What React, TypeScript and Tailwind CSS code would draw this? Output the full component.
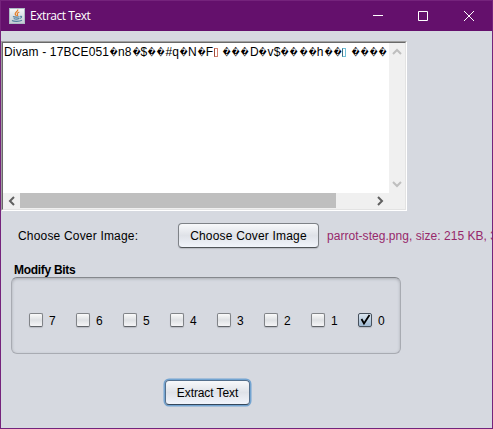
import React from "react";

type Run = [string, number];

const runs: Run[] = [
  ["Divam - 17BCE051", 105],
  ["�", 9],
  ["n8", 13.5],
  ["�", 9],
  ["$", 6.5],
  ["��", 18.5],
  ["#q", 13.5],
  ["�", 9],
  ["N", 8.7],
  ["�", 9],
  ["F", 8.3],
  ["|r", 8],
  ["���", 28],
  ["D", 8.5],
  ["�", 9],
  ["v$", 12.7],
  ["����", 36.7],
  ["h", 6.8],
  ["��", 18.2],
  ["|b", 9],
  ["�����", 46],
];

function TextRun({ text, width }: { text: string; width: number }) {
  if (text[0] === "|") {
    return (
      <span className="flex h-[14px] shrink-0 items-center" style={{ width }}>
        <span className={text === "|r" ? "h-[9px] w-[4px] border border-[#d08070] border-l-[#a04a3a]" : "h-[9px] w-[4px] border border-[#70c0d8] border-l-[#426e80]"} />
      </span>
    );
  }
  if (text[0] === "�") {
    return (
      <span className="flex h-[14px] shrink-0" style={{ width }}>
        {text.split("").map((c, i) => (
          <span key={i} className="w-[9.2px] shrink-0 scale-x-[0.88] scale-y-[1.15] text-center font-['DejaVu_Sans',sans-serif] text-[8px] font-bold leading-[16px]">{c}</span>
        ))}
      </span>
    );
  }
  return <span className="shrink-0 whitespace-pre tracking-[0.15px]" style={{ width }}>{text}</span>;
}

function Chevron({ d, color }: { d: string; color: string }) {
  return (
    <svg width="10" height="10" viewBox="0 0 10 10" fill="none" stroke={color} strokeWidth="2">
      <path d={d} />
    </svg>
  );
}

function JavaIcon() {
  return (
    <svg width="16" height="16" viewBox="0 0 16 16" fill="none">
      <defs>
        <linearGradient id="tile" x1="0" y1="0" x2="0" y2="1">
          <stop offset="0" stopColor="#f5f7f8" />
          <stop offset="1" stopColor="#c2cbd2" />
        </linearGradient>
      </defs>
      <rect x=".5" y=".5" width="15" height="15" fill="url(#tile)" stroke="#aebbc5" />
      <path d="M8.7 1.5c.8 1.8-3.2 2.8-2.5 4.8.3.8 1 1 1.2 1.8M10.3 4C8.8 4.7 7.7 5.3 8.5 6.5c.5.8.1 1.2-.3 1.6" stroke="#e57d25" strokeWidth="1.2" />
      <path d="M4 8.5c1 .8 5 .8 6.5.2M4.7 10.5c1.5.7 4.2.6 5.5.1M3 12.5c2 1.3 7.5 1.2 10-.2M11 8.4c2-.7 2.5 1.3-.3 2.2" stroke="#527f9f" strokeWidth="1.1" />
    </svg>
  );
}

const bits = [7, 6, 5, 4, 3, 2, 1, 0];

export default function App() {
  return (
    <div className="flex h-[429px] w-[493px] flex-col overflow-hidden border border-[#75237c] bg-[#d6d9e0] font-['Liberation_Sans',Arial,sans-serif] text-[12px] leading-[14px] text-black">
      <header className="flex h-[30px] shrink-0 items-center bg-[#64106c] pl-2 text-white">
        <JavaIcon />
        <span className="ml-[5px] w-[62px] whitespace-nowrap font-['Open_Sans',sans-serif] text-[12px] tracking-[-0.45px]">Extract Text</span>
        <svg className="ml-auto mr-[8px]" width="112" height="14" viewBox="0 0 112 14" fill="none" stroke="white">
          <path d="M1 6.5h10M46.5 2.5h9v9h-9zM92 2l10 10M102 2L92 12" />
        </svg>
      </header>

      <main className="flex min-h-0 flex-1 flex-col">
        <section className="mt-[10px] flex h-[170px] w-[406px] shrink-0 flex-col border-b border-r border-l border-t border-b-white border-r-white border-l-[#a0a0a0] border-t-[#a0a0a0]">
          <div className="flex min-h-0 flex-1 flex-col border border-b-[#e3e3e3] border-r-[#e3e3e3] border-l-[#696969] border-t-[#696969] bg-[#f0f0f0]">
            <div className="flex h-[150px]">
              <div className="w-[386px] overflow-hidden bg-white pl-[1px] pt-[2px]">
                <div className="flex w-[384px] overflow-hidden">
                  {runs.map(([text, width], i) => <TextRun key={i} text={text} width={width} />)}
                </div>
              </div>
              <div className="flex w-4 flex-col items-center justify-between py-[4px]">
                <Chevron d="M1 7l4-4 4 4" color="#bfbfbf" />
                <Chevron d="M1 3l4 4 4-4" color="#bfbfbf" />
              </div>
            </div>
            <div className="flex h-4 items-center">
              <div className="flex w-[17px] justify-center"><Chevron d="M7 1L3 5l4 4" color="#606060" /></div>
              <div className="h-[15px] w-[316px] self-start bg-[#bfbfbf]" />
              <div className="ml-[39px]"><Chevron d="M3 1l4 4-4 4" color="#606060" /></div>
            </div>
          </div>
        </section>

        <div className="mt-[11px] flex h-[26px] shrink-0 items-center whitespace-nowrap pl-[17px]">
          <span className="w-[160px] shrink-0 pt-[2px] tracking-[0.18px]">Choose Cover Image:</span>
          <button className="h-[25px] w-[141px] shrink-0 rounded-[4px] border border-[#7e8287] border-b-[#505458] bg-linear-to-b from-[#f8f9fb] via-[#dfe2e8] to-[#f1f4fb] pt-[1px] tracking-[0.18px] shadow-[0_1px_1px_#b8bbc3]">Choose Cover Image</button>
          <span className="ml-2 w-[166px] shrink-0 pt-[2px] tracking-[0.04px] text-[#96286b]">parrot-steg.png, size: 215 KB, 3</span>
        </div>

        <section className="ml-[10px] mt-[15px] flex w-[390px] shrink-0 flex-col">
          <h2 className="h-[14px] pl-[3px] text-[12px] font-bold tracking-[-0.3px]">Modify Bits</h2>
          <div className="flex h-[77px] items-center rounded-[6px] border border-[#a8abb2] border-t-[#85888d] pl-[17px] pt-[9px] shadow-[inset_0_1px_3px_#aaadb4]">
            {bits.map((bit) => (
              <label key={bit} className="flex w-[47px] shrink-0 items-center">
                <span className={bit === 0
                  ? "flex size-[14px] items-center justify-center rounded-[2px] border border-[#47515d] bg-linear-to-b from-[#dbe6f0] to-[#9fb9d2] shadow-[0_1px_1px_#b8bbc3]"
                  : "size-[14px] rounded-[2px] border border-[#818488] border-b-[#606368] bg-linear-to-b from-[#fafafa] via-[#dfe1e4] to-[#f5f5f7] shadow-[0_1px_1px_#b8bbc3]"}>
                  {bit === 0 && (
                    <svg width="12" height="12" viewBox="0 0 12 12" fill="none" stroke="black" strokeWidth="1.8">
                      <path d="M2.5 5l2.5 4.5L10.5 1" />
                    </svg>
                  )}
                </span>
                <span className="ml-[6px] pt-[1px]">{bit}</span>
              </label>
            ))}
          </div>
        </section>

        <button className="ml-[164px] mt-[26px] h-[25px] w-[85px] shrink-0 rounded-[4px] border border-[#546f8c] border-b-[#35475b] bg-linear-to-b from-[#f8f9fb] via-[#dfe2e8] to-[#f1f4fb] tracking-[-0.1px] shadow-[0_0_0_1.5px_#73a4d1]">Extract Text</button>
      </main>
    </div>
  );
}
